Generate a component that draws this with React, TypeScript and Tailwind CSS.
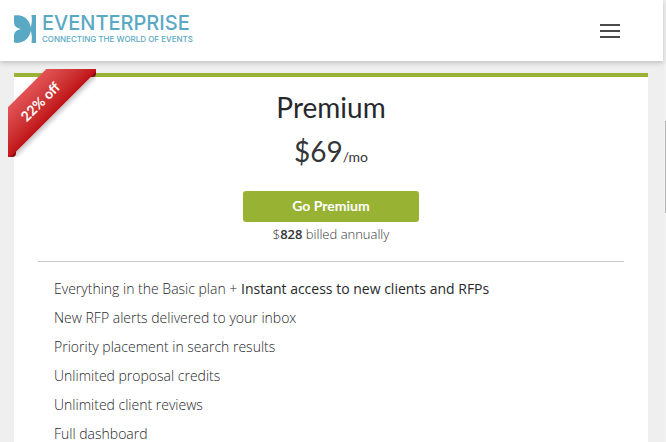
import React from "react";

const features = [
  "New RFP alerts delivered to your inbox",
  "Priority placement in search results",
  "Unlimited proposal credits",
  "Unlimited client reviews",
  "Full dashboard",
];

const Logo: React.FC = () => (
  <a href="#" className="flex items-center gap-1.5 pb-1 text-[#5aa9c4]">
    <svg
      className="h-7 w-[22px] flex-shrink-0"
      viewBox="0 0 22 28"
      fill="currentColor"
      aria-hidden="true"
    >
      <path d="M0 0.5C2 0 4 0 6 0.5C11 1.5 14.5 5 16 9.5C16.6 11 17 12.5 17 14C17 15.5 16.6 17 16 18.5C14.5 23 11 26.5 6 27.5C4 28 2 28 0 27.5V21C0 17.5 2 15 7 14C2 13 0 10.5 0 7Z" />
      <path d="M17.5 0H22V28H17.5C18.2 23 18 18 16 14C18 10 18.2 5 17.5 0Z" />
    </svg>
    <span className="flex flex-col font-['Inter',sans-serif]">
      <span className="text-[20px] leading-5 font-medium">EVENTERPRISE</span>
      <span className="text-[8px] leading-3 font-medium">
        CONNECTING THE WORLD OF EVENTS
      </span>
    </span>
  </a>
);

const Header: React.FC = () => (
  <header className="relative z-10 mr-px flex h-[61px] items-center justify-between bg-white pr-[43px] pl-3.5 shadow-[0_2px_5px_rgba(0,0,0,0.2)]">
    <Logo />
    <button
      type="button"
      aria-label="Open menu"
      className="flex w-5 flex-col gap-1"
    >
      <span className="h-0.5 w-full bg-[#4a4a4d]"></span>
      <span className="h-0.5 w-full bg-[#4a4a4d]"></span>
      <span className="h-0.5 w-full bg-[#4a4a4d]"></span>
    </button>
  </header>
);

const Ribbon: React.FC = () => (
  <div className="absolute -top-2 -left-1.5 h-[88px] w-[88px] overflow-hidden">
    <span className="absolute top-0 right-0 h-2 w-2 rounded-br-sm bg-[#a80a0e]"></span>
    <span className="absolute bottom-0 left-0 h-2 w-2 rounded-br-sm bg-[#a80a0e]"></span>
    <span className="absolute top-3.5 -left-[38px] block w-[140px] -rotate-45 bg-gradient-to-b from-[#e25355] to-[#bf1016] text-center text-sm leading-[37px] font-bold text-white shadow-[0_3px_5px_rgba(0,0,0,0.25)]">
      22% off
    </span>
  </div>
);

const PricingCard: React.FC = () => (
  <section className="relative border-t-4 border-[#9ab236] bg-white px-6 pt-3 text-center">
    <Ribbon />
    <h2 className="text-[28px] leading-9 text-[#26282b]">Premium</h2>
    <p className="mt-1.5 leading-10 text-[#333538]">
      <span className="text-[28px]">$69</span>
      <span className="text-sm">/mo</span>
    </p>
    <button
      type="button"
      className="mt-[15px] h-[31px] w-44 rounded-[3px] bg-[#98b233] pb-0.5 text-sm font-bold text-white"
    >
      Go Premium
    </button>
    <p className="mt-0.5 font-['Open_Sans',sans-serif] text-[13px] leading-5 font-light text-[#333538]">
      $<strong className="font-semibold">828</strong> billed annually
    </p>
    <hr className="mt-[17px] border-[#c9c9c9]" />
    <ul className="px-4 pt-3 text-left font-['Open_Sans',sans-serif] text-sm leading-[29px] font-light text-[#26282b]">
      <li>
        Everything in the Basic plan +{" "}
        <span className="font-normal">
          Instant access to new clients and RFPs
        </span>
      </li>
      {features.map((feature) => (
        <li key={feature}>{feature}</li>
      ))}
    </ul>
  </section>
);

const App: React.FC = () => {
  return (
    <div className="flex h-screen overflow-hidden bg-[#efefef] font-['Lato',sans-serif]">
      <div className="min-w-0 flex-1">
        <Header />
        <main className="pt-3 pr-4 pl-3.5">
          <PricingCard />
        </main>
      </div>
      <div className="flex w-0.5 flex-col items-end bg-[#f1f1f1] pt-[121px]">
        <div className="h-[92px] w-px bg-[#b5b5b5]"></div>
      </div>
    </div>
  );
};

export default App;
